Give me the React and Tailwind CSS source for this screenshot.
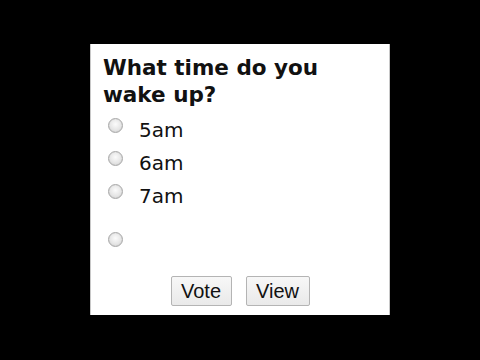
import { useState } from "react";

const options = ["5am", "6am", "7am"];

function Radio({ checked, onClick }) {
  return (
    <button
      type="button"
      onClick={onClick}
      className="mt-[4px] ml-[5px] flex h-[15px] w-[15px] shrink-0 items-center justify-center rounded-full border border-[#a8a8a8] bg-[radial-gradient(circle_at_50%_40%,#fbfbfb_0%,#e6e6e6_55%,#cfcfcf_100%)] shadow-[inset_0_0_1px_rgba(0,0,0,0.15)]"
    >
      {checked && <span className="h-[7px] w-[7px] rounded-full bg-[#2b63b0]" />}
    </button>
  );
}

export default function App() {
  const [choice, setChoice] = useState(null);

  return (
    <div className="flex h-[360px] w-[480px] justify-center bg-black pt-[44px]">
      <div className="flex h-[271px] w-[300px] flex-col border-x border-[#c8c8c8] bg-white px-[12px] pt-[10px]">
        {/* Poll question */}
        <h2 className="font-['DejaVu_Sans',Verdana,sans-serif] text-[21.5px] font-bold leading-[27px] text-[#111]">
          What time do you wake up?
        </h2>

        {/* Answers */}
        <div className="mt-[6px] flex flex-col">
          {options.map((o, i) => (
            <div key={o} className="flex h-[33px] items-start">
              <Radio checked={choice === i} onClick={() => setChoice(i)} />
              <span className="ml-[16px] font-['DejaVu_Sans',Verdana,sans-serif] text-[20px] leading-[33px] text-[#111]">
                {o}
              </span>
            </div>
          ))}
          <div className="mt-[15px] flex h-[33px] items-start">
            <Radio checked={choice === 3} onClick={() => setChoice(3)} />
          </div>
        </div>

        {/* Actions */}
        <div className="mt-[15px] flex justify-center gap-[14px] font-['Liberation_Sans',Arial,sans-serif] text-[20px] text-[#111]">
          <button className="h-[30px] w-[61px] rounded-[2px] border border-[#b4b4b4] bg-[linear-gradient(#f7f7f7,#e9e9e9)] leading-none">
            Vote
          </button>
          <button className="h-[30px] w-[64px] rounded-[2px] border border-[#b4b4b4] bg-[linear-gradient(#f7f7f7,#e9e9e9)] leading-none">
            View
          </button>
        </div>
      </div>
    </div>
  );
}
